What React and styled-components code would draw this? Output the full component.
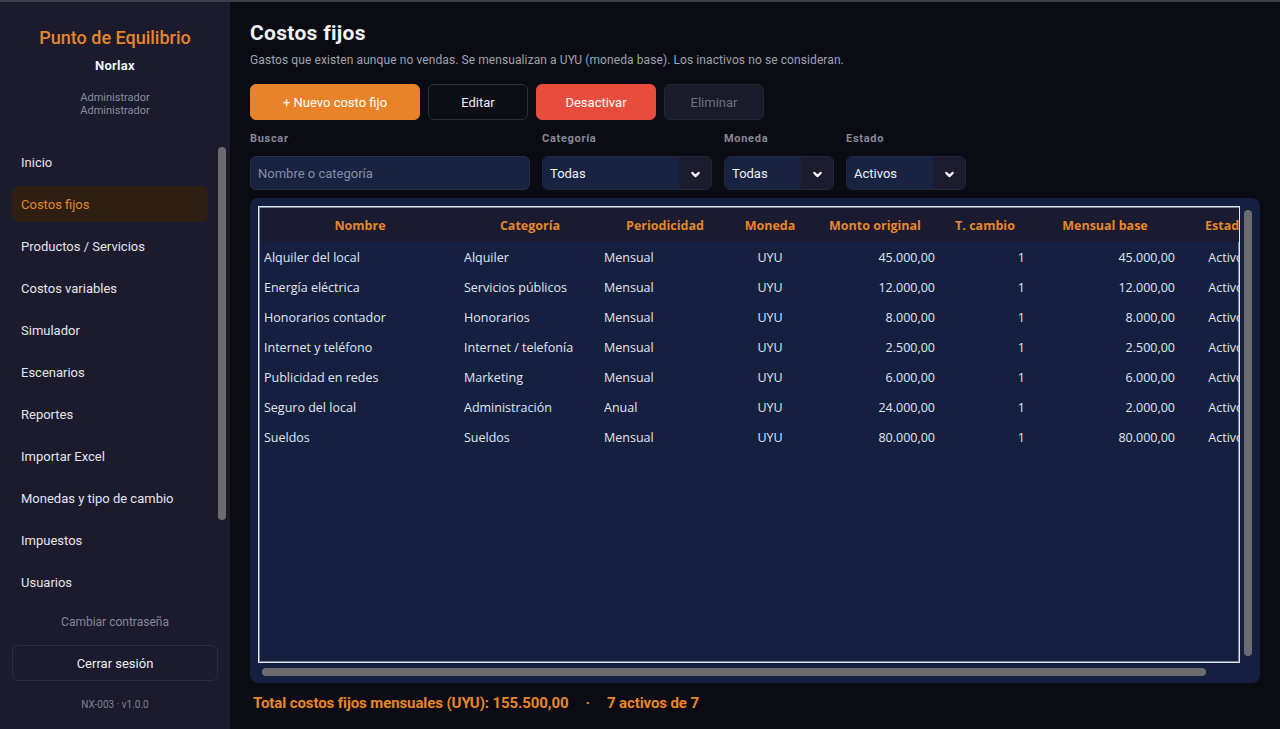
import React from 'react';
import styled, {createGlobalStyle} from 'styled-components';
import {ChevronDown} from 'lucide-react';

const GlobalStyle = createGlobalStyle`
  html, body {
    margin: 0;
    padding: 0;
    background: #0b0c13;
    font-family: Roboto, "Liberation Sans", sans-serif;
  }
  * { box-sizing: border-box; }
`;

const navItems = [
  "Inicio",
  "Costos fijos",
  "Productos / Servicios",
  "Costos variables",
  "Simulador",
  "Escenarios",
  "Reportes",
  "Importar Excel",
  "Monedas y tipo de cambio",
  "Impuestos",
  "Usuarios",
];

const columns = [
  {key: "nombre", title: "Nombre", width: 200, align: "left"},
  {key: "categoria", title: "Categoría", width: 140, align: "left"},
  {key: "periodo", title: "Periodicidad", width: 130, align: "left"},
  {key: "moneda", title: "Moneda", width: 80, align: "center"},
  {key: "monto", title: "Monto original", width: 130, align: "right"},
  {key: "cambio", title: "T. cambio", width: 90, align: "right"},
  {key: "mensual", title: "Mensual base", width: 150, align: "right"},
  {key: "estado", title: "Estado", width: 92, align: "center"},
];

const rows = [
  ["Alquiler del local", "Alquiler", "Mensual", "UYU", "45.000,00", "1", "45.000,00", "Activo"],
  ["Energía eléctrica", "Servicios públicos", "Mensual", "UYU", "12.000,00", "1", "12.000,00", "Activo"],
  ["Honorarios contador", "Honorarios", "Mensual", "UYU", "8.000,00", "1", "8.000,00", "Activo"],
  ["Internet y teléfono", "Internet / telefonía", "Mensual", "UYU", "2.500,00", "1", "2.500,00", "Activo"],
  ["Publicidad en redes", "Marketing", "Mensual", "UYU", "6.000,00", "1", "6.000,00", "Activo"],
  ["Seguro del local", "Administración", "Anual", "UYU", "24.000,00", "1", "2.000,00", "Activo"],
  ["Sueldos", "Sueldos", "Mensual", "UYU", "80.000,00", "1", "80.000,00", "Activo"],
];

const Shell = styled.div`
  display: flex;
  height: 100vh;
  border-top: 2px solid #3e3e4a;
  overflow: hidden;
`;

/* sidebar */
const Sidebar = styled.aside`
  width: 230px;
  flex: 0 0 230px;
  background: #1b1b2d;
  display: flex;
  flex-direction: column;
  align-items: stretch;
  padding-top: 26px;
`;

const Brand = styled.div`
  text-align: center;
  color: #e8862a;
  font-size: 18px;
  font-weight: 500;
  line-height: 20px;
`;

const Company = styled.div`
  text-align: center;
  color: #f2f2f6;
  font-size: 13px;
  font-weight: 700;
  line-height: 16px;
  margin-top: 10px;
  letter-spacing: 0.3px;
`;

const Role = styled.div`
  text-align: center;
  color: #8a8d99;
  font-size: 11px;
  line-height: 13px;
  margin-top: 17px;
`;

const NavArea = styled.div`
  display: flex;
  margin-top: 27px;
  padding-left: 12px;
  height: 456px;
`;

const NavList = styled.nav`
  width: 196px;
  display: flex;
  flex-direction: column;
  gap: 6px;
`;

const NavItem = styled.div`
  height: 36px;
  display: flex;
  align-items: center;
  padding-left: 9px;
  border-radius: 8px;
  font-size: 13px;
  color: ${props => props.active ? "#e8862a" : "#e4e4ec"};
  background: ${props => props.active ? "#2e1f12" : "transparent"};
`;

const SideTrack = styled.div`
  width: 8px;
  margin-left: 10px;
  padding-top: 3px;
`;

const SideThumb = styled.div`
  height: 373px;
  border-radius: 4px;
  background: #6c6c70;
`;

const ChangePass = styled.div`
  margin-top: 14px;
  text-align: center;
  font-size: 12px;
  line-height: 16px;
  color: #858894;
`;

const LogoutButton = styled.div`
  margin: 15px 12px 0;
  height: 36px;
  border: 1px solid #2c2c40;
  border-radius: 6px;
  display: flex;
  align-items: center;
  justify-content: center;
  color: #ececf2;
  font-size: 13px;
`;

const Version = styled.div`
  margin-top: 17px;
  text-align: center;
  font-size: 10px;
  line-height: 14px;
  color: #80838f;
`;

/* main */
const Main = styled.main`
  flex: 1;
  display: flex;
  flex-direction: column;
  padding: 19px 20px 18px 20px;
  min-width: 0;
`;

const Title = styled.h1`
  margin: 0;
  font-size: 21px;
  line-height: 24px;
  font-weight: 700;
  color: #f2f2f6;
  letter-spacing: 0.3px;
`;

const Subtitle = styled.p`
  margin: 7px 0 0;
  font-size: 12px;
  line-height: 16px;
  color: #9fa3ae;
  letter-spacing: 0.09px;
`;

const Actions = styled.div`
  display: flex;
  gap: 8px;
  margin-top: 16px;
`;

const variants = {
  primary: {bg: "#e8832a", border: "#e8832a", color: "#ffffff"},
  ghost: {bg: "#0c0d15", border: "#2d303e", color: "#f0f0f4"},
  danger: {bg: "#e74c3c", border: "#e74c3c", color: "#ffffff"},
  disabled: {bg: "#1a1b2a", border: "#23253a", color: "#6d7180"},
};

const ActionButton = styled.button`
  height: 36px;
  width: ${props => props.width}px;
  border-radius: 6px;
  border: 1px solid ${props => variants[props.variant].border};
  background: ${props => variants[props.variant].bg};
  color: ${props => variants[props.variant].color};
  font-family: Roboto, sans-serif;
  font-size: 13px;
  padding: 0;
`;

const Filters = styled.div`
  display: flex;
  gap: 12px;
  margin-top: 12px;
`;

const Field = styled.div`
  display: flex;
  flex-direction: column;
  gap: 10px;
  width: ${props => props.width}px;
`;

const Label = styled.label`
  font-size: 11px;
  line-height: 14px;
  font-weight: 700;
  color: #858a96;
  letter-spacing: 0.7px;
`;

const SearchInput = styled.div`
  height: 34px;
  border-radius: 6px;
  background: #172341;
  border: 1px solid #252d47;
  display: flex;
  align-items: center;
  padding-left: 7px;
  font-size: 13px;
  color: #858da2;
`;

const Select = styled.div`
  height: 34px;
  border-radius: 6px;
  border: 1px solid #20273e;
  display: flex;
  overflow: hidden;
`;

const SelectValue = styled.div`
  flex: 1;
  background: #172341;
  display: flex;
  align-items: center;
  padding-left: 7px;
  font-size: 13px;
  color: #f0f0f4;
`;

const SelectArrow = styled.div`
  width: 32px;
  background: #1c1c2e;
  display: flex;
  align-items: center;
  justify-content: center;
  color: #f4f4f8;
  padding-top: 2px;
`;

const Panel = styled.section`
  flex: 1;
  margin-top: 8px;
  background: #152040;
  border-radius: 8px;
  padding: 8px 8px 7px 8px;
  display: grid;
  grid-template-columns: 1fr 8px;
  grid-template-rows: 1fr 8px;
  column-gap: 4px;
  row-gap: 5px;
  min-height: 0;
`;

const TableFrame = styled.div`
  border: 1px solid #e2e6ee;
  box-shadow: inset 0 0 0 1px #7b8396;
  overflow: hidden;
  background: #152040;
  padding: 1px;
  min-height: 0;
`;

const Table = styled.table`
  border-collapse: collapse;
  table-layout: fixed;
  width: 1012px;
  font-family: "Open Sans", "Liberation Sans", sans-serif;
  font-size: 12.5px;
`;

const HeadRow = styled.tr`
  background: #1a1a30;
  height: 34px;
`;

const Th = styled.th`
  color: #e8862a;
  font-weight: 700;
  text-align: center;
  padding: 0 4px;
  white-space: nowrap;
`;

const Td = styled.td`
  color: #e2e6ee;
  height: 30px;
  padding: 0 ${props => props.align === "right" ? 5 : 4}px;
  text-align: ${props => props.align};
  white-space: nowrap;
`;

const VTrack = styled.div`
  padding: 4px 0 7px;
`;

const VThumb = styled.div`
  height: 100%;
  background: #6c6c70;
  border-radius: 4px;
`;

const HTrack = styled.div`
  padding-left: 4px;
`;

const HThumb = styled.div`
  height: 8px;
  width: 944px;
  background: #6c6c70;
  border-radius: 4px;
`;

const Summary = styled.div`
  margin-top: 12px;
  padding-left: 3px;
  display: flex;
  gap: 17px;
  font-size: 15px;
  line-height: 16px;
  font-weight: 700;
  color: #e8862a;
  letter-spacing: -0.1px;
`;

const App = () => {
  return (
    <>
      <GlobalStyle />
      <Shell>
        <Sidebar>
          <Brand>Punto de Equilibrio</Brand>
          <Company>Norlax</Company>
          <Role>Administrador<br />Administrador</Role>
          <NavArea>
            <NavList>
              {navItems.map(item => (
                <NavItem key={item} active={item === "Costos fijos"}>{item}</NavItem>
              ))}
            </NavList>
            <SideTrack><SideThumb /></SideTrack>
          </NavArea>
          <ChangePass>Cambiar contraseña</ChangePass>
          <LogoutButton>Cerrar sesión</LogoutButton>
          <Version>NX-003 · v1.0.0</Version>
        </Sidebar>
        <Main>
          <Title>Costos fijos</Title>
          <Subtitle>Gastos que existen aunque no vendas. Se mensualizan a UYU (moneda base). Los inactivos no se consideran.</Subtitle>
          <Actions>
            <ActionButton variant="primary" width={170}>+ Nuevo costo fijo</ActionButton>
            <ActionButton variant="ghost" width={100}>Editar</ActionButton>
            <ActionButton variant="danger" width={120}>Desactivar</ActionButton>
            <ActionButton variant="disabled" width={100}>Eliminar</ActionButton>
          </Actions>
          <Filters>
            <Field width={280}>
              <Label>Buscar</Label>
              <SearchInput>Nombre o categoría</SearchInput>
            </Field>
            <Field width={170}>
              <Label>Categoría</Label>
              <Select>
                <SelectValue>Todas</SelectValue>
                <SelectArrow><ChevronDown size={13} strokeWidth={4} /></SelectArrow>
              </Select>
            </Field>
            <Field width={110}>
              <Label>Moneda</Label>
              <Select>
                <SelectValue>Todas</SelectValue>
                <SelectArrow><ChevronDown size={13} strokeWidth={4} /></SelectArrow>
              </Select>
            </Field>
            <Field width={120}>
              <Label>Estado</Label>
              <Select>
                <SelectValue>Activos</SelectValue>
                <SelectArrow><ChevronDown size={13} strokeWidth={4} /></SelectArrow>
              </Select>
            </Field>
          </Filters>
          <Panel>
            <TableFrame>
              <Table>
                <colgroup>
                  {columns.map(c => <col key={c.key} style={{width: c.width}} />)}
                </colgroup>
                <thead>
                  <HeadRow>
                    {columns.map(c => <Th key={c.key}>{c.title}</Th>)}
                  </HeadRow>
                </thead>
                <tbody>
                  {rows.map(r => (
                    <tr key={r[0]}>
                      {r.map((cell, i) => (
                        <Td key={i} align={columns[i].align}>{cell}</Td>
                      ))}
                    </tr>
                  ))}
                </tbody>
              </Table>
            </TableFrame>
            <VTrack><VThumb /></VTrack>
            <HTrack><HThumb /></HTrack>
          </Panel>
          <Summary>
            <span>Total costos fijos mensuales (UYU): 155.500,00</span>
            <span>·</span>
            <span>7 activos de 7</span>
          </Summary>
        </Main>
      </Shell>
    </>
  );
};

export default App;
